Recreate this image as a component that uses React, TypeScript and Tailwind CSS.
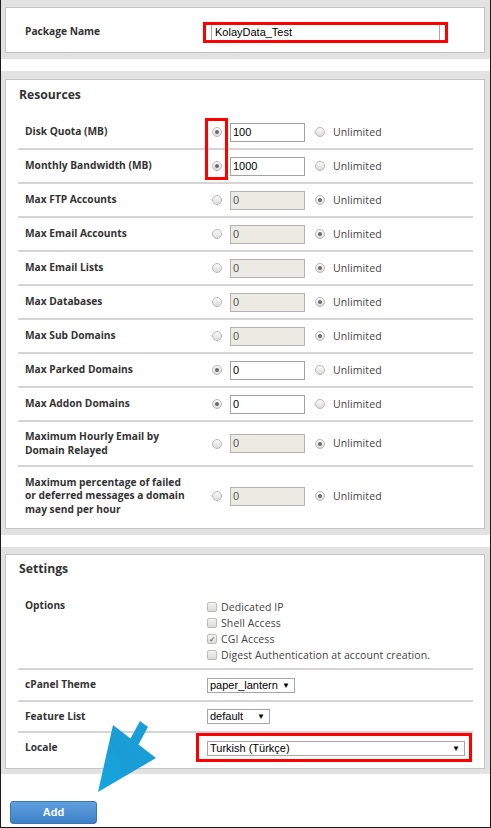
import React from 'react';

const label = "font-['Open_Sans',sans-serif] font-bold text-[10.2px] leading-[13.5px] text-[#333]";
const plain = "font-['Open_Sans',sans-serif] text-[10.5px] leading-[13px] text-[#444] tracking-[0.1px]";
const arial = "font-['Liberation_Sans',Arial,sans-serif] text-[11px]";
const heading = "font-['Open_Sans',sans-serif] font-bold text-[12.2px] leading-[16px] text-[#333]";

function Radio({ checked }: { checked?: boolean }) {
  return (
    <span className="inline-flex w-[10px] h-[10px] shrink-0 items-center justify-center rounded-full border border-[#b8b8b8] bg-linear-to-b from-[#fbfbfb] to-[#dcdcdc]">
      {checked && <span className="w-[4px] h-[4px] rounded-full bg-[#6a6a6a]" />}
    </span>
  );
}

function Checkbox({ checked }: { checked?: boolean }) {
  return (
    <span className="inline-flex w-[10px] h-[10px] shrink-0 items-center justify-center rounded-[2px] border border-[#bcbcbc] bg-linear-to-b from-[#f4f4f4] to-[#dadada] text-[8px] leading-none text-[#444]">
      {checked ? '✓' : ''}
    </span>
  );
}

function Select({ value, width }: { value: string; width: string }) {
  return (
    <div className={`${width} h-[15px] flex items-center justify-between border border-[#a6a6a6] bg-white pl-[2px] pr-[4px] ${arial} leading-[13px] text-black`}>
      <span>{value}</span>
      <span className="text-[8px]">▼</span>
    </div>
  );
}

type Res = { name: string; value: string; limited: boolean; h: string; sep: boolean };

const resources: Res[] = [
  { name: 'Disk Quota (MB)', value: '100', limited: true, h: 'h-[34px]', sep: true },
  { name: 'Monthly Bandwidth (MB)', value: '1000', limited: true, h: 'h-[34px]', sep: true },
  { name: 'Max FTP Accounts', value: '0', limited: false, h: 'h-[34px]', sep: true },
  { name: 'Max Email Accounts', value: '0', limited: false, h: 'h-[34px]', sep: true },
  { name: 'Max Email Lists', value: '0', limited: false, h: 'h-[34px]', sep: true },
  { name: 'Max Databases', value: '0', limited: false, h: 'h-[34px]', sep: true },
  { name: 'Max Sub Domains', value: '0', limited: false, h: 'h-[34px]', sep: true },
  { name: 'Max Parked Domains', value: '0', limited: true, h: 'h-[34px]', sep: true },
  { name: 'Max Addon Domains', value: '0', limited: true, h: 'h-[34px]', sep: true },
  { name: 'Maximum Hourly Email by Domain Relayed', value: '0', limited: false, h: 'h-[45px]', sep: true },
  { name: 'Maximum percentage of failed or deferred messages a domain may send per hour', value: '0', limited: false, h: 'h-[58px]', sep: false },
];

const options: [string, boolean][] = [
  ['Dedicated IP', false],
  ['Shell Access', false],
  ['CGI Access', true],
  ['Digest Authentication at account creation.', false],
];

function ResourceRow({ r }: { r: Res }) {
  return (
    <div className={`flex items-center ${r.h} ${r.sep ? 'border-b-2 border-[#d5d5d5]' : ''}`}>
      <div className="w-[194px] shrink-0 pl-[7px]">
        <div className={`${label} max-w-[168px]`}>{r.name}</div>
      </div>
      <Radio checked={r.limited} />
      <div
        className={`ml-[8px] w-[75px] h-[19px] flex items-center border pl-[2px] ${arial} ${
          r.limited ? 'bg-white border-[#a3a3a3] text-black' : 'bg-[#ebebe4] border-[#b3b3b3] text-[#555]'
        }`}
      >
        {r.value}
      </div>
      <div className="ml-[10px] flex">
        <Radio checked={!r.limited} />
      </div>
      <span className={`ml-[8px] ${plain}`}>Unlimited</span>
    </div>
  );
}

export default function App() {
  return (
    <div className="relative w-[491px] h-[828px] overflow-hidden bg-white border-x border-b border-[#1c1c1c]">
      {/* Package name */}
      <div className="bg-[#e2e2e2] pt-[7px] pb-[6px] pl-[4px] pr-[5px]">
        <div className="h-[46px] border border-[#c4c4c4] bg-white flex items-center pt-[4px] pl-[19px]">
          <div className={`w-[186px] shrink-0 ${label}`}>Package Name</div>
          <div className={`w-[229px] h-[17px] flex items-center border border-[#a9a9a9] bg-white pl-[3px] ${arial} text-black`}>
            KolayData_Test
          </div>
        </div>
      </div>

      <div className="h-[12px]" />

      {/* Resources */}
      <div className="bg-[#e2e2e2] pt-[8px] pb-[6px] pl-[4px] pr-[5px]">
        <div className="h-[450px] border border-[#c4c4c4] bg-white pt-[7px]">
          <div className={`pl-[13px] h-[16px] mb-[13px] ${heading}`}>Resources</div>
          <div className="ml-[12px] mr-[11px]">
            {resources.map((r) => (
              <ResourceRow key={r.name} r={r} />
            ))}
          </div>
        </div>
      </div>

      <div className="h-[12px]" />

      {/* Settings */}
      <div className="bg-[#e2e2e2] pt-[7px] pb-[5px] pl-[4px] pr-[5px]">
        <div className="h-[215px] border border-[#c4c4c4] bg-white pt-[6px]">
          <div className={`pl-[13px] h-[16px] mb-[14px] ${heading}`}>Settings</div>
          <div className="ml-[12px] mr-[11px]">
            <div className="flex items-start h-[79px] pt-[8px] border-b-2 border-[#d5d5d5]">
              <div className={`w-[189px] shrink-0 pl-[7px] ${label}`}>Options</div>
              <div className="flex flex-col">
                {options.map(([t, c]) => (
                  <div key={t} className="h-[16px] flex items-center gap-[4px]">
                    <Checkbox checked={c} />
                    <span className={plain}>{t}</span>
                  </div>
                ))}
              </div>
            </div>
            <div className="flex items-center h-[32px] border-b-2 border-[#d5d5d5]">
              <div className={`w-[189px] shrink-0 pl-[7px] ${label}`}>cPanel Theme</div>
              <Select value="paper_lantern" width="w-[88px]" />
            </div>
            <div className="flex items-center h-[31px] border-b-2 border-[#d5d5d5]">
              <div className={`w-[189px] shrink-0 pl-[7px] ${label}`}>Feature List</div>
              <Select value="default" width="w-[63px]" />
            </div>
            <div className="flex items-center h-[30px]">
              <div className={`w-[189px] shrink-0 pl-[7px] ${label}`}>Locale</div>
              <Select value="Turkish (Türkçe)" width="w-[258px]" />
            </div>
          </div>
        </div>
      </div>

      <div className="flex pt-[27px] pl-[9px]">
        <button className="w-[87px] h-[23px] rounded-[3px] border border-[#3b77b4] bg-linear-to-b from-[#5fa1e0] to-[#3d80c6] text-white font-bold font-['Liberation_Sans',Arial,sans-serif] text-[11px]">
          Add
        </button>
      </div>

      {/* annotations */}
      <div className="absolute left-[202px] top-[22px] w-[245px] h-[21px] border-[3px] border-[#f00]" />
      <div className="absolute left-[204px] top-[118px] w-[23px] h-[62px] border-[3px] border-[#f00]" />
      <div className="absolute left-[195px] top-[733px] w-[276px] h-[29px] border-[3px] border-[#f00]" />

      <svg className="absolute left-[90px] top-[715px]" width="70" height="82" viewBox="0 0 70 82">
        <defs>
          <linearGradient id="arr" x1="1" y1="0" x2="0" y2="1">
            <stop offset="0" stopColor="#1d9fd6" />
            <stop offset="0.5" stopColor="#1a9cd6" />
            <stop offset="1" stopColor="#13a6df" />
          </linearGradient>
        </defs>
        <polygon points="7,77 22,10 39.5,23.5 49,6 57,12 47.5,29.5 65,43" fill="url(#arr)" />
      </svg>
    </div>
  );
}
